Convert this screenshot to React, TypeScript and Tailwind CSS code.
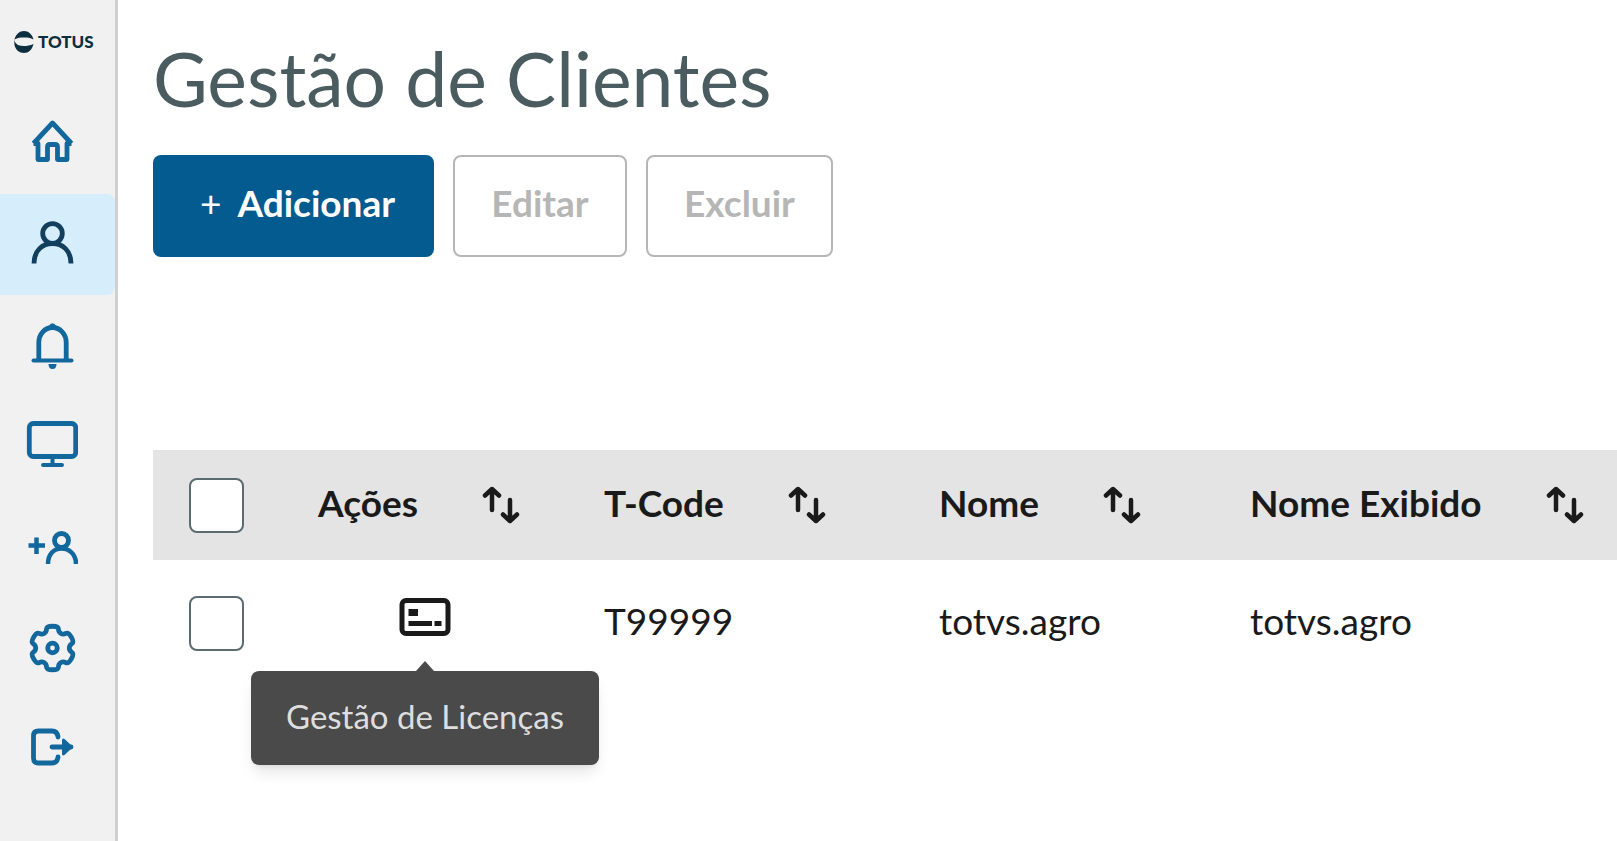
import { useState } from "react";
import type { ReactNode } from "react";

const gearPath = (() => {
  // six teeth, corners softened by curving through the edge midpoints
  const pts: [number, number][] = [];
  for (let i = 0; i < 6; i++) {
    for (const [a, r] of [[-21, 17], [-15, 22.5], [15, 22.5], [21, 17]]) {
      const t = ((i * 60 + a) * Math.PI) / 180;
      pts.push([26.5 + r * Math.sin(t), 25 - r * Math.cos(t)]);
    }
  }
  const mid = (i: number) => {
    const [a, b] = [pts[i % pts.length], pts[(i + 1) % pts.length]];
    return `${((a[0] + b[0]) / 2).toFixed(2)} ${((a[1] + b[1]) / 2).toFixed(2)}`;
  };
  return `M${mid(0)}` + pts.map((_, i) => {
    const p = pts[(i + 1) % pts.length];
    return `Q${p[0].toFixed(2)} ${p[1].toFixed(2)} ${mid(i + 1)}`;
  }).join("") + "Z";
})();

const menu: { label: string; icon: ReactNode }[] = [
  {
    label: "Início",
    icon: <path d="M7.500 25.500L26.500 5L45.500 25.500M7.500 25.500H12V41.500H21.500V29Q21.500 26.500 24 26.500H29Q31.500 26.500 31.500 29V41.500H41V25.500H45.500" />,
  },
  {
    label: "Clientes",
    icon: <><circle cx="26.500" cy="14.500" r="9.800" /><path d="M8 44.500C8 31.500 16.500 24.500 26.500 24.500S45 31.500 45 44.500" /></>,
  },
  {
    label: "Notificações",
    icon: <><path d="M7.500 40.500H45.500" strokeLinecap="round" strokeWidth="4" /><path d="M12.800 40V22.500C12.800 14 19 7.500 26.500 7.500S40.200 14 40.200 22.500V40" /><path d="M22.500 6.500Q26.500 0 30.500 6.500L32 9H21Z" fill="currentColor" stroke="none" /><path d="M22.500 44H30.500Q30.500 49 26.500 49T22.500 44Z" fill="currentColor" stroke="none" /></>,
  },
  {
    label: "Monitoramento",
    icon: <><rect x="3.300" y="2.500" width="46.400" height="33" rx="4" /><path d="M26.500 35.500V44M17 44H36" strokeLinecap="round" strokeWidth="4" /></>,
  },
  {
    label: "Adicionar usuário",
    icon: <><circle cx="35.500" cy="18.500" r="7" /><path d="M22 42C22 32 28 26.500 35.500 26.500S50 32 50 42M10.500 15.500V32M2.500 23.500H19" strokeWidth="4.500" /></>,
  },
  {
    label: "Configurações",
    icon: <><path d={gearPath} /><circle cx="26.500" cy="25" r="4.800" /></>,
  },
  {
    label: "Sair",
    icon: <><path d="M32 13V12.500Q31 7 26 7H12.500Q7.500 7 7.500 12V34Q7.500 39 12.500 39H26Q31 39 32 33.500V33M26 23H45" strokeLinecap="round" /><path d="M37.500 16L45 23L37.500 30Z" fill="currentColor" strokeWidth="3" /></>,
  },
];

const columns = [
  { title: "Ações", width: "w-[286px]" },
  { title: "T-Code", width: "w-[335px]" },
  { title: "Nome", width: "w-[311px]" },
  { title: "Nome Exibido", width: "" },
];

const clients = [{ code: "T99999", name: "totvs.agro", display: "totvs.agro" }];

function Logo() {
  return (
    <div className="flex items-center gap-1 h-[84px] pl-[14px] text-[#0c2f40]">
      <svg viewBox="0 0 20 24" className="w-5 h-6 shrink-0" fill="currentColor">
        <path d="M0.500 9.500C2 4 5.500 1 10 1S18 4 19.500 9.500C16.500 7.800 13.500 7.500 10 7.500S3.500 7.800 0.500 9.500Z" />
        <path d="M0 8.500Q0.500 13 4 15C8 16.500 13.500 16.500 19.500 14C18 20 14.500 23 10 23S1.500 20 0.500 15Z" />
      </svg>
      <span className="text-[17px] leading-5 font-black">TOTUS</span>
    </div>
  );
}

function Checkbox({ label, checked, onChange }: { label: string; checked: boolean; onChange: () => void }) {
  return (
    <input
      type="checkbox"
      aria-label={label}
      checked={checked}
      onChange={onChange}
      className="block appearance-none size-[55px] rounded-lg border-2 border-[#5b6c70] bg-white checked:bg-[#045b8f]"
    />
  );
}

function SortIcon() {
  return (
    <svg viewBox="0 0 38 38" className="w-[38px] h-[38px]" fill="none" stroke="currentColor" strokeWidth="4.500" strokeLinecap="round" strokeLinejoin="round">
      <path d="M10 24V4M3 9.500L10 3L17 9.500M28 14V34M21 28.500L28 35L35 28.500" />
    </svg>
  );
}

export default function App() {
  const [active, setActive] = useState("Clientes");
  const [selected, setSelected] = useState<string[]>([]);

  const toggle = (code: string) =>
    setSelected(selected.includes(code) ? selected.filter((c) => c !== code) : [...selected, code]);

  return (
    <div className="flex min-h-screen bg-white text-[#1a1a1a] font-['Lato',sans-serif]">
      {/* SIDEBAR */}
      <aside className="w-[118px] shrink-0 bg-[#f1f1f1] border-r-3 border-[#d0d0d0]">
        <Logo />
        <nav className="flex flex-col pt-[9px]">
          {menu.map((item) => (
            <button
              key={item.label}
              type="button"
              aria-label={item.label}
              onClick={() => setActive(item.label)}
              className={`flex items-center h-[101px] pl-[26px] rounded-r-lg ${
                active === item.label ? "bg-[#d6eefc] text-[#123f5e]" : "text-[#12679c]"
              }`}
            >
              <svg viewBox="0 0 52 52" className="size-[52px]" fill="none" stroke="currentColor" strokeWidth="4.800" strokeLinejoin="round">
                {item.icon}
              </svg>
            </button>
          ))}
        </nav>
      </aside>

      {/* CONTENT */}
      <main className="flex-1 min-w-0 pl-[35px] pt-[30px]">
        <h1 className="text-[75px] leading-[96px] text-[#4a5c60]">Gestão de Clientes</h1>

        <div className="flex gap-[19px] mt-[29px] text-[37px] font-bold">
          <button type="button" className="flex items-center justify-center gap-4 w-[281px] h-[102px] pl-2 pb-1.5 rounded-lg bg-[#045b8f] text-white">
            <span className="font-normal">+</span>
            Adicionar
          </button>
          <button type="button" disabled className="w-[174px] h-[102px] pb-1.5 rounded-lg border-2 border-[#b6b6b6] text-[#b6b6b6]">
            Editar
          </button>
          <button type="button" disabled className="w-[187px] h-[102px] pb-1.5 rounded-lg border-2 border-[#b6b6b6] text-[#b6b6b6]">
            Excluir
          </button>
        </div>

        <table className="w-full mt-[193px] table-fixed text-left text-[37px] leading-[46px]">
          <thead className="bg-[#e4e4e4]">
            <tr className="h-[110px]">
              <th className="w-[129px] pl-9">
                <Checkbox
                  label="Selecionar todos"
                  checked={selected.length === clients.length}
                  onChange={() => setSelected(selected.length ? [] : clients.map((c) => c.code))}
                />
              </th>
              {columns.map((col) => (
                <th key={col.title} className={`pl-9 font-bold ${col.width}`}>
                  <button type="button" className="flex items-center gap-16 whitespace-nowrap">
                    <span className="pb-1">{col.title}</span>
                    <SortIcon />
                  </button>
                </th>
              ))}
            </tr>
          </thead>
          <tbody>
            {clients.map((c) => (
              <tr key={c.code} className="h-[126px]">
                <td className="pl-9">
                  <Checkbox label={`Selecionar ${c.code}`} checked={selected.includes(c.code)} onChange={() => toggle(c.code)} />
                </td>
                <td className="pb-3">
                  <div className="relative flex justify-center">
                    <button type="button" aria-describedby="license-tip" aria-label="Licenças">
                      <svg viewBox="0 0 52 38" className="w-[52px] h-[38px]" fill="none" stroke="currentColor" strokeWidth="5">
                        <rect x="3" y="2.500" width="46" height="33" rx="4" />
                        <path d="M9.500 14.500H19" strokeWidth="7" />
                        <path d="M9.500 25.500H33M35.500 25.500H42.500" />
                      </svg>
                    </button>
                    <div
                      id="license-tip"
                      role="tooltip"
                      className="absolute top-[73px] left-1/2 -translate-x-1/2 w-[348px] h-[94px] flex items-center justify-center pb-1 rounded-lg bg-[#4a4a4a] text-[#dedede] text-[33px] whitespace-nowrap shadow-lg"
                    >
                      <svg viewBox="0 0 18 10" className="absolute bottom-full w-[18px] h-[10px]" fill="#4a4a4a">
                        <path d="M9 0L18 10H0Z" />
                      </svg>
                      Gestão de Licenças
                    </div>
                  </div>
                </td>
                <td className="pl-9 pb-1">{c.code}</td>
                <td className="pl-9 pb-1">{c.name}</td>
                <td className="pl-9 pb-1">{c.display}</td>
              </tr>
            ))}
          </tbody>
        </table>
      </main>
    </div>
  );
}
